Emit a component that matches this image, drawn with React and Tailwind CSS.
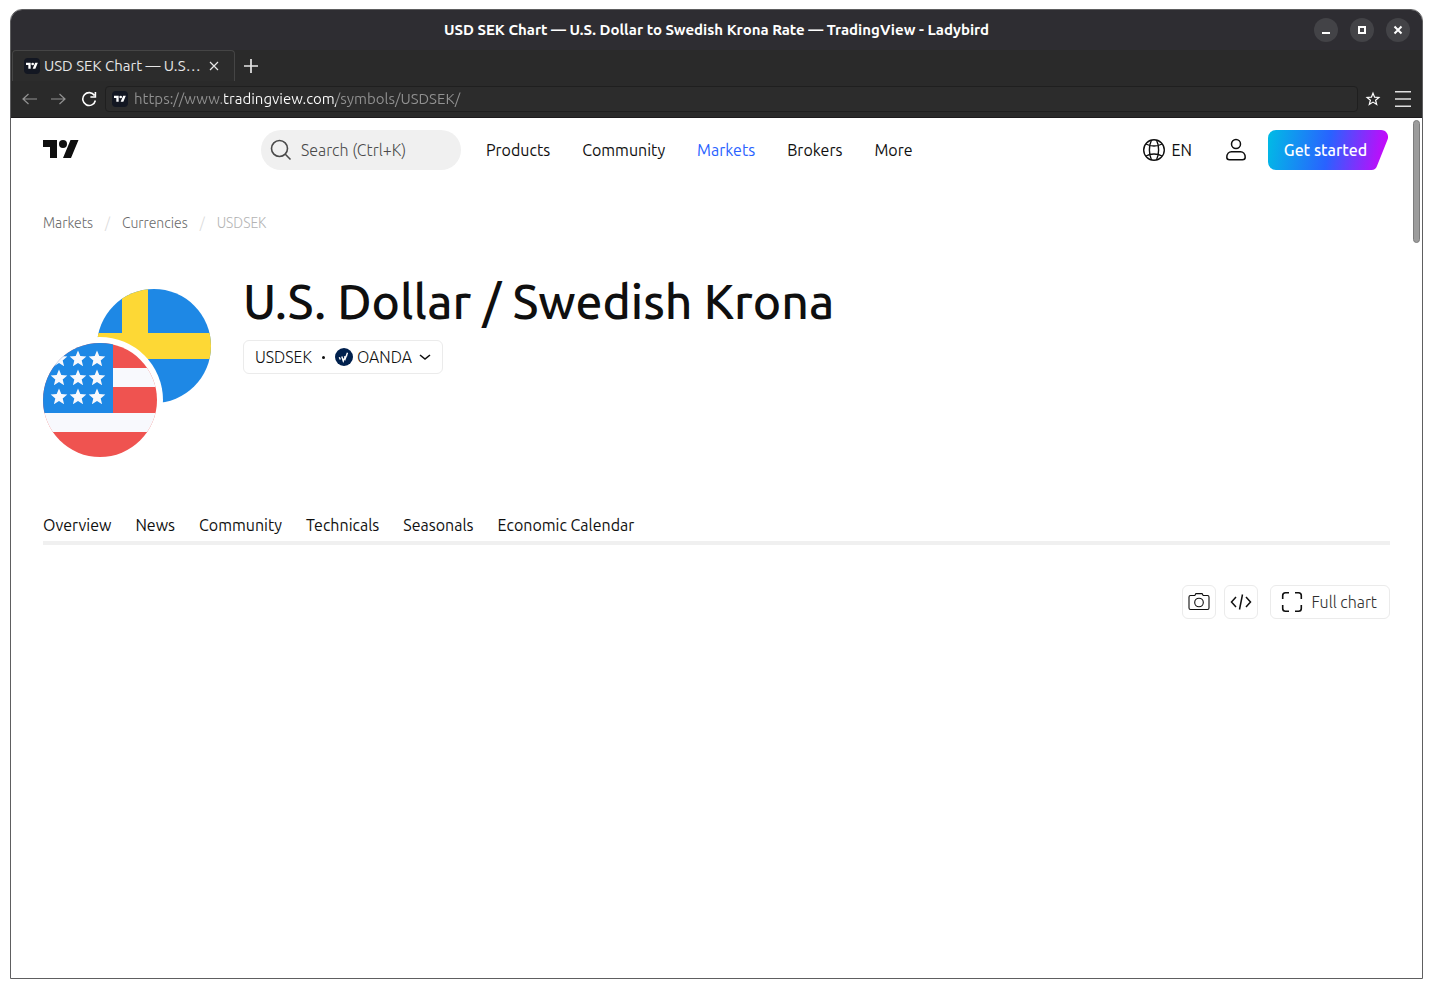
import { useState } from 'react';

const NAV = ['Products', 'Community', 'Markets', 'Brokers', 'More'];
const TABS = ['Overview', 'News', 'Community', 'Technicals', 'Seasonals', 'Economic Calendar'];
const STAR = 'M0-8.5 2.3-2.9 8.3-2.5 3.7 1.4 5.1 7.2 0 4.1-5.1 7.2-3.7 1.4-8.3-2.5-2.3-2.9Z';

function TvLogo({ className }) {
  return (
    <svg viewBox="0 0 36 28" className={className} fill="currentColor" aria-hidden="true">
      <path d="M14 22H7V11H0V4h14v18zM28 22h-8l7.5-18h8L28 22z" />
      <circle cx="20" cy="8" r="4" />
    </svg>
  );
}

function Favicon() {
  return (
    <span className="flex h-4 w-4 flex-none items-center justify-center rounded-sm bg-[#131722] text-white">
      <TvLogo className="h-3 w-3" />
    </span>
  );
}

function Icon({ className, children, width = 1.5, box = 24 }) {
  return (
    <svg
      viewBox={`0 0 ${box} ${box}`}
      className={className}
      fill="none"
      stroke="currentColor"
      strokeWidth={width}
      aria-hidden="true"
    >
      {children}
    </svg>
  );
}

function TitleBar() {
  const button = 'flex h-6 w-6 items-center justify-center rounded-full bg-[#434347] text-white';
  return (
    <div className="grid h-10 grid-cols-[1fr_auto_1fr] items-center bg-[#2e2d32] px-3">
      <p className="col-start-2 text-[15px] font-bold text-white">
        USD SEK Chart — U.S. Dollar to Swedish Krona Rate — TradingView - Ladybird
      </p>
      <div className="flex justify-end gap-3 justify-self-end">
        <button className={button} aria-label="Minimize">
          <Icon className="h-4 w-4" box={16} width={2}>
            <path d="M4 11h8" />
          </Icon>
        </button>
        <button className={button} aria-label="Maximize">
          <Icon className="h-4 w-4" box={16} width={2}>
            <path d="M5 5h6v6H5z" />
          </Icon>
        </button>
        <button className={button} aria-label="Close">
          <Icon className="h-4 w-4" box={16} width={2}>
            <path d="m4.5 4.5 7 7m0-7-7 7" />
          </Icon>
        </button>
      </div>
    </div>
  );
}

function BrowserBars() {
  const [url, setUrl] = useState('https://www.tradingview.com/symbols/USDSEK/');
  return (
    <div className="border-b border-[#1d1b1d] bg-[#2a2a2a] text-[#e6e6e6]">
      <div className="flex h-[31px] items-stretch">
        <div className="ml-px flex w-[223px] items-center rounded-t-sm border border-b-0 border-[#454545] bg-[#2c2c2c] pl-[11px] pr-3">
          <Favicon />
          <span className="ml-1 w-[160px] flex-none truncate text-[15px]">USD SEK Chart — U.S…</span>
          <button className="ml-1" aria-label="Close tab">
            <Icon className="h-3 w-3" box={12} width={1.2}>
              <path d="m2 2 8 8m0-8-8 8" />
            </Icon>
          </button>
        </div>
        <button className="ml-1 px-1" aria-label="New tab">
          <Icon className="h-4 w-4" box={16} width={1.7}>
            <path d="M1 8h14M8 1v14" />
          </Icon>
        </button>
      </div>
      <form className="flex h-9 items-center pl-[10px] pr-[11px]" onSubmit={(e) => e.preventDefault()}>
        <button type="button" aria-label="Back" className="text-[#929292]">
          <Icon className="h-4 w-4" box={16} width={1.2}>
            <path d="M16 8H2m5.500-5L2 8l5.500 5" />
          </Icon>
        </button>
        <button type="button" aria-label="Forward" className="ml-[14px] text-[#929292]">
          <Icon className="h-4 w-4" box={16} width={1.2}>
            <path d="M0 8h14M8.500 3l5.500 5-5.500 5" />
          </Icon>
        </button>
        <button type="button" aria-label="Reload" className="ml-[14px] text-white">
          <Icon className="h-4 w-4" box={16} width={1.6}>
            <path d="M13.500 4.500A6.400 6.400 0 1 0 14.400 9.500M14.400 1v5H9.400" />
          </Icon>
        </button>
        <label className="ml-2 flex h-[26px] flex-1 items-center rounded-sm border border-[#1f1f1f] bg-[#2c2c2c] px-[6px]">
          <Favicon />
          <input
            value={url}
            onChange={(e) => setUrl(e.target.value)}
            aria-label="Address"
            className="ml-[6px] min-w-0 flex-1 bg-[linear-gradient(90deg,#929292_89px,#ffffff_89px,#ffffff_202px,#929292_202px)] bg-clip-text text-[15px] text-transparent outline-none"
          />
        </label>
        <button type="button" aria-label="Bookmark" className="ml-[7px] text-white">
          <Icon className="h-4 w-4" box={16} width={1.2}>
            <path d="M8 2.200 9.600 6.200 13.900 6.500 10.600 9.200 11.700 13.500 8 11.100 4.300 13.500 5.400 9.200 2.100 6.500 6.400 6.200Z" />
          </Icon>
        </button>
        <button type="button" aria-label="Menu" className="ml-[14px] text-[#e0e0e0]">
          <Icon className="h-4 w-4" box={16} width={1.5}>
            <path d="M0 .8h16M0 8h16M0 15.200h16" />
          </Icon>
        </button>
      </form>
    </div>
  );
}

function Header() {
  return (
    <header className="flex h-16 items-center pl-8 pr-[34px]">
      <a href="#home" aria-label="TradingView" className="w-[218px] flex-none">
        <TvLogo className="h-7 w-9" />
      </a>
      <button className="flex h-10 w-[200px] flex-none items-center gap-[6px] rounded-full bg-[#f0f0f0] pl-[6px] font-light text-[#4a4a4a]">
        <Icon className="h-7 w-7" box={28} width={1.6}>
          <circle cx="12.500" cy="12.500" r="8" />
          <path d="m18.300 18.300 5.200 5.200" />
        </Icon>
        Search (Ctrl+K)
      </button>
      <nav className="ml-[25px] flex gap-8">
        {NAV.map((item) => (
          <a key={item} href="#nav" className={item === 'Markets' ? 'text-[#2962ff]' : ''}>
            {item}
          </a>
        ))}
      </nav>
      <button className="ml-auto flex items-center gap-1">
        <Icon className="h-7 w-7" box={28} width={1.4}>
          <circle cx="14" cy="14" r="10.300" />
          <path d="M11.500 4c-2.800 5.800-2.800 14.200 0 20M16.500 4c2.800 5.800 2.800 14.200 0 20M6 8c4.500 2.600 11.500 2.600 16 0M6 20c4.500-2.600 11.500-2.600 16 0" />
        </Icon>
        EN
      </button>
      <button className="ml-[30px]" aria-label="Open user menu">
        <Icon className="h-7 w-7" box={28} width={1.5}>
          <circle cx="14" cy="8" r="4.500" />
          <path d="M9.500 15.700h9c2.600 0 4.700 2.200 4.700 5.500 0 1.700-1 2.500-2.700 2.500h-13c-1.700 0-2.700-.8-2.700-2.500 0-3.300 2.100-5.500 4.700-5.500Z" />
        </Icon>
      </button>
      <button className="ml-[18px] h-10 w-[120px] bg-[linear-gradient(100deg,#00bce5_0%,#2962ff_50%,#d500f9_100%)] pr-[5px] font-medium text-white [clip-path:path('M8_0H113A7_7_0_0_1_119.400_10L109_36A6_6_0_0_1_103.500_40H8A8_8_0_0_1_0_32V8A8_8_0_0_1_8_0Z')]">
        Get started
      </button>
    </header>
  );
}

function PairLogo() {
  return (
    <svg viewBox="0 0 168 168" className="h-[168px] w-[168px] flex-none" aria-label="USD SEK">
      <defs>
        <clipPath id="se">
          <circle cx="111" cy="57" r="57" />
        </clipPath>
        <clipPath id="us">
          <circle cx="57" cy="111" r="57" />
        </clipPath>
      </defs>
      <g clipPath="url(#se)">
        <path fill="#1e88e5" d="M54 0h114v114H54z" />
        <path fill="#fdd835" d="M79 0h26v114H79zM54 44h114v26H54z" />
      </g>
      <circle cx="57" cy="111" r="63" fill="#fff" />
      <g clipPath="url(#us)">
        <path fill="#ef5350" d="M0 54h114v114H0z" />
        <path fill="#f8f9fd" d="M70 79h44v19H70zM0 124h114v19H0z" />
        <path fill="#1e88e5" d="M0 54h70v70H0z" />
        {[70, 89, 108].map((y) =>
          [16, 35, 54].map((x) => (
            <path key={`${x}-${y}`} d={STAR} transform={`translate(${x} ${y})`} fill="#f8f9fd" />
          )),
        )}
      </g>
    </svg>
  );
}

function Breadcrumbs() {
  return (
    <nav className="mt-[31px] flex gap-3 text-sm leading-5 font-light text-[#6a6a6a]" aria-label="Breadcrumbs">
      <a href="#markets">Markets</a>
      <span className="text-[#dadada]">/</span>
      <a href="#currencies">Currencies</a>
      <span className="text-[#dadada]">/</span>
      <span className="text-[#b4b4b4]">USDSEK</span>
    </nav>
  );
}

function SymbolHeader() {
  return (
    <section className="mt-14 flex gap-8">
      <PairLogo />
      <div className="-mt-4">
        <h1 className="text-[48px] leading-14 font-medium">U.S. Dollar / Swedish Krona</h1>
        <button className="mt-[11px] flex h-[34px] items-center rounded-md border border-[#ebebeb] px-[11px] font-light">
          USDSEK
          <span className="mx-[10px] h-[3px] w-[3px] rounded-full bg-[#0f0f0f]" />
          <svg viewBox="0 0 18 18" className="mr-1 h-[18px] w-[18px]" aria-hidden="true">
            <circle cx="9" cy="9" r="9" fill="#00204d" />
            <path
              d="m4.300 9.300 1 2.200M6.800 8.500l1.500 4.500 1.200-2.700M9.500 8.200l.7 2.500 2.300-6M11.300 7.200l.6 1.200"
              fill="none"
              stroke="#fff"
              strokeWidth="1.400"
            />
          </svg>
          OANDA
          <Icon className="ml-[7px] h-3 w-3" box={12} width={1.6}>
            <path d="m1 4 5 4 5-4" />
          </Icon>
        </button>
      </div>
    </section>
  );
}

function ChartTools() {
  const button = 'flex h-[34px] items-center rounded-md border border-[#ebebeb]';
  return (
    <div className="mt-10 flex justify-end">
      <button className={`${button} w-[34px] justify-center`} aria-label="Take a snapshot">
        <Icon className="h-7 w-7 flex-none" box={28} width={1.1}>
          <path d="M5.500 7.500h4.300l1.100-1.900h6.200l1.100 1.900h4.300c1 0 1.500.6 1.500 1.500v11c0 1-.5 1.500-1.500 1.500h-17c-1 0-1.500-.5-1.500-1.500V9c0-.9.500-1.500 1.500-1.500Z" />
          <circle cx="14" cy="14.500" r="4.300" />
        </Icon>
      </button>
      <button className={`${button} ml-2 w-[34px] justify-center`} aria-label="Get widget">
        <Icon className="h-7 w-7 flex-none" box={28} width={1.5}>
          <path d="m9 9-4.500 5L9 19M19 9l4.500 5-4.500 5M15.500 6.500l-3 15" />
        </Icon>
      </button>
      <button className={`${button} ml-3 pl-[7px] pr-3 font-light text-[#2e2e2e]`}>
        <Icon className="mr-[6px] h-7 w-7 text-[#0f0f0f]" box={28} width={1.6}>
          <path d="M4.700 11V7.500c0-1.700 1.100-2.800 2.800-2.800H11M17 4.700h3.500c1.700 0 2.800 1.100 2.800 2.800V11M23.300 17v3.500c0 1.700-1.100 2.800-2.800 2.800H17M11 23.300H7.500c-1.700 0-2.800-1.100-2.800-2.800V17" />
        </Icon>
        Full chart
      </button>
    </div>
  );
}

export default function App() {
  return (
    <div className="flex min-h-screen bg-white px-[10px] pt-[9px] pb-[10px] font-['Ubuntu','Noto_Sans',sans-serif] text-base text-[#0f0f0f]">
      <div className="flex min-w-0 flex-1 flex-col overflow-hidden rounded-t-xl border border-[#5e5e60]">
        <TitleBar />
        <BrowserBars />
        <div className="relative flex-1">
          <Header />
          <main className="px-8">
            <Breadcrumbs />
            <SymbolHeader />
            <nav className="mt-14 flex gap-6 border-b-4 border-[#f0f0f0] pb-1" aria-label="Symbol">
              {TABS.map((tab) => (
                <a key={tab} href="#tab" className="leading-6">
                  {tab}
                </a>
              ))}
            </nav>
            <ChartTools />
          </main>
          <div className="absolute top-[2px] right-[2px] h-[123px] w-[7px] rounded-full border border-[#7c7c7c] bg-[#9c9c9c]" />
        </div>
      </div>
    </div>
  );
}
